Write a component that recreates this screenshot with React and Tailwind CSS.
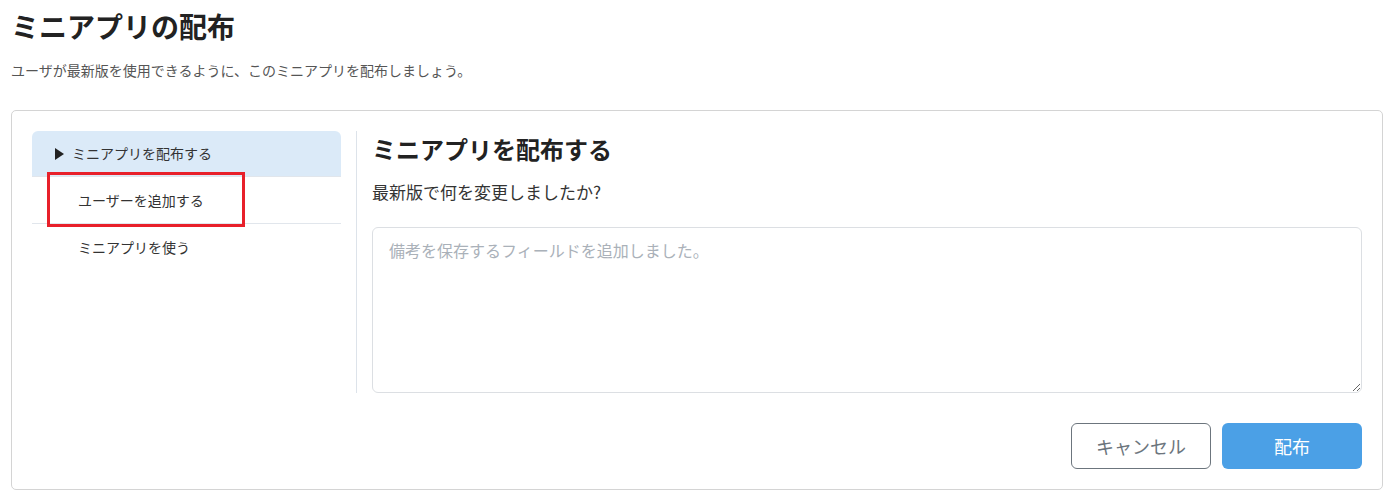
import React from 'react';

const FONT = { fontFamily: '"Noto Sans CJK JP", "Noto Sans", sans-serif' };

const navItems = [
    { label: 'ミニアプリを配布する', active: true },
    { label: 'ユーザーを追加する' },
    { label: 'ミニアプリを使う', last: true },
];

function NavItem({ item }) {
    if (item.active) {
        return (
            <div className="h-[46px] flex items-center pl-[23px] bg-[#dbeaf8] rounded-t-[6px] border-b border-[#e1e6ec] text-[14px] text-[#333]">
                <svg width="9" height="12" viewBox="0 0 9 12" className="mr-[8px]">
                    <path d="M0 0 L9 6 L0 12 Z" fill="#222" />
                </svg>
                {item.label}
            </div>
        );
    }
    return (
        <div
            className={
                item.last
                    ? 'h-[47px] flex items-center pl-[46px] text-[14px] text-[#333]'
                    : 'h-[47px] flex items-center pl-[46px] border-b border-[#e1e6ec] text-[14px] text-[#333]'
            }
        >
            {item.label}
        </div>
    );
}

export default function App() {
    return (
        <div className="w-full h-[504px] bg-white pl-[11px] pr-[6px] pt-[8px]" style={FONT}>
            <h1 className="text-[28px] leading-[36px] font-bold text-[#222]">ミニアプリの配布</h1>
            <p className="mt-[16px] text-[14px] leading-[20px] text-[#555]">
                ユーザが最新版を使用できるように、このミニアプリを配布しましょう。
            </p>

            <div className="mt-[30px] border border-[#d4d4d4] rounded-[5px] p-5">
                <div className="flex">
                    <nav className="relative w-[309px] shrink-0">
                        {navItems.map(item => (
                            <NavItem key={item.label} item={item} />
                        ))}
                        {/* red annotation box */}
                        <div className="absolute left-[15px] top-[41px] w-[198px] h-[55px] border-[3px] border-[#e8202a]" />
                    </nav>

                    <div className="ml-[15px] pl-[15px] border-l border-[#dde3ea] flex-1">
                        <h2 className="mt-[2px] text-[24px] leading-[32px] font-bold text-[#222]">ミニアプリを配布する</h2>
                        <p className="mt-[15px] text-[17px] leading-[24px] text-[#333]">最新版で何を変更しましたか?</p>
                        <textarea
                            className="mt-[23px] block w-full h-[166px] border border-[#dcdfe3] rounded-[6px] px-4 pt-[10px] text-[16px] leading-[24px] text-[#333] placeholder:text-[#aab1b9] outline-none"
                            placeholder="備考を保存するフィールドを追加しました。"
                        />
                    </div>
                </div>

                <div className="mt-[30px] flex justify-end gap-[11px]">
                    <button className="w-[140px] h-[46px] border border-[#6c757d] rounded-[6px] text-[18px] text-[#6c757d] bg-white">
                        キャンセル
                    </button>
                    <button className="w-[140px] h-[46px] rounded-[6px] text-[18px] text-white bg-[#4ba0e6]">
                        配布
                    </button>
                </div>
            </div>
        </div>
    );
}
